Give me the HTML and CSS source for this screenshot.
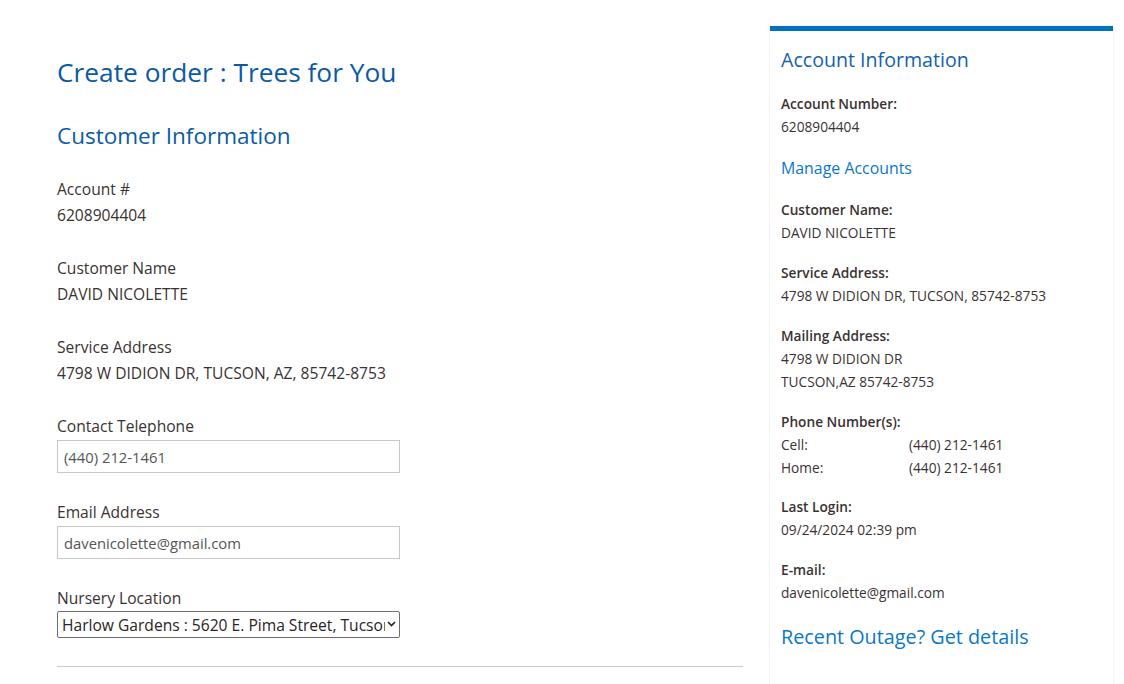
FILE: index.html
```html
<!DOCTYPE html>
<html lang="en">
<head>
<meta charset="utf-8">
<title>Create order : Trees for You</title>
<link rel="stylesheet" href="styles.css">
</head>
<body>
<div class="page">
  <main class="main">
    <h1 class="page-title">Create order : Trees for You</h1>
    <h2 class="section-title">Customer Information</h2>

    <div class="field">
      <div class="field-label">Account #</div>
      <div class="field-value">6208904404</div>
    </div>
    <div class="field">
      <div class="field-label">Customer Name</div>
      <div class="field-value">DAVID NICOLETTE</div>
    </div>
    <div class="field">
      <div class="field-label">Service Address</div>
      <div class="field-value">4798 W DIDION DR, TUCSON, AZ, 85742-8753</div>
    </div>
    <div class="field field-input">
      <label class="field-label" for="phone">Contact Telephone</label>
      <input class="text-input" id="phone" type="text" value="(440) 212-1461">
    </div>
    <div class="field field-input">
      <label class="field-label" for="email">Email Address</label>
      <input class="text-input" id="email" type="text" value="davenicolette@gmail.com">
    </div>
    <div class="field">
      <label class="field-label" for="nursery">Nursery Location</label>
      <div class="select-wrap">
        <select class="select-input" id="nursery">
          <option>Harlow Gardens : 5620 E. Pima Street, Tucson, AZ 85712</option>
        </select>
        <svg class="select-chevron" width="9" height="6" viewBox="0 0 9 6"><path d="M1 1 L4.5 4.5 L8 1" fill="none" stroke="#222" stroke-width="1.6"/></svg>
      </div>
    </div>
    <hr class="divider">
  </main>

  <aside class="sidebar">
    <div class="card">
      <h3 class="card-title">Account Information</h3>
      <div class="info">
        <div class="info-label">Account Number:</div>
        <div>6208904404</div>
      </div>
      <a class="card-link" href="#">Manage Accounts</a>
      <div class="info">
        <div class="info-label">Customer Name:</div>
        <div>DAVID NICOLETTE</div>
      </div>
      <div class="info">
        <div class="info-label">Service Address:</div>
        <div>4798 W DIDION DR, TUCSON, 85742-8753</div>
      </div>
      <div class="info">
        <div class="info-label">Mailing Address:</div>
        <div>4798 W DIDION DR</div>
        <div>TUCSON,AZ 85742-8753</div>
      </div>
      <div class="info">
        <div class="info-label">Phone Number(s):</div>
        <div class="phone-row"><span>Cell:</span><span>(440) 212-1461</span></div>
        <div class="phone-row"><span>Home:</span><span>(440) 212-1461</span></div>
      </div>
      <div class="info">
        <div class="info-label">Last Login:</div>
        <div>09/24/2024 02:39 pm</div>
      </div>
      <div class="info">
        <div class="info-label">E-mail:</div>
        <div>davenicolette@gmail.com</div>
      </div>
      <a class="outage-link" href="#">Recent Outage? Get details</a>
    </div>
  </aside>
</div>
</body>
</html>
```

FILE: styles.css
```css
* { box-sizing: border-box; }

html, body {
  margin: 0;
  padding: 0;
  background: #ffffff;
}

body {
  font-family: "Open Sans", "Noto Sans", "Liberation Sans", sans-serif;
  color: #3a3232;
  height: 684px;
  overflow: hidden;
}

.page {
  display: flex;
  align-items: flex-start;
  gap: 27px;
  padding: 26px 11px 0 57px;
}

.main {
  width: 686px;
  flex: 0 0 686px;
  padding-top: 26px;
}

.page-title {
  margin: 0;
  font-size: 26.3px;
  line-height: 40px;
  font-weight: 400;
  color: #0b5aa3;
}

.section-title {
  margin: 28px 0 0;
  font-size: 22.5px;
  line-height: 32px;
  font-weight: 400;
  color: #0b5aa3;
}

.field {
  display: flex;
  flex-direction: column;
  margin-top: 27px;
  font-size: 15.6px;
  line-height: 26px;
}

.section-title + .field { margin-top: 24px; }

.field-label,
.field-value {
  display: block;
  height: 26px;
}

.text-input {
  margin-top: 1px;
  width: 343px;
  height: 33px;
  border: 1px solid #c8c8c8;
  border-radius: 0;
  padding: 0 6px;
  font-family: inherit;
  font-size: 14.8px;
  color: #555555;
  background: #ffffff;
  outline: none;
}

.field-input + .field { margin-top: 26px; }

.select-wrap {
  position: relative;
  width: 343px;
}

.select-input {
  -webkit-appearance: none;
  appearance: none;
  display: block;
  width: 343px;
  height: 27px;
  border: 1px solid #6e6e6e;
  border-radius: 2px;
  padding: 0 14px 0 4px;
  font-family: inherit;
  font-size: 15.6px;
  color: #2a2424;
  background: #ffffff;
  outline: none;
}

.select-chevron {
  position: absolute;
  right: 4px;
  top: 10px;
  pointer-events: none;
}

.divider {
  margin: 28px 0 0;
  border: 0;
  border-top: 1px solid #cccccc;
  height: 0;
}

.sidebar {
  width: 343px;
  flex: 0 0 343px;
}

.card {
  background: #ffffff;
  border-top: 5px solid #0072bc;
  box-shadow: 0 0 0 1px #f4f4f4, 1px 0 2px rgba(0,0,0,0.03);
  padding: 14px 11px 80px;
  font-size: 13.7px;
  line-height: 23px;
}

.card-title {
  margin: 0;
  font-size: 19.6px;
  line-height: 30px;
  font-weight: 400;
  color: #1262ac;
}

.info {
  margin-top: 16.9px;
}

.info-label {
  font-weight: 600;
}

.card-link {
  display: block;
  margin-top: 18px;
  font-size: 15.9px;
  line-height: 24px;
  color: #0a78c6;
  text-decoration: none;
}

.card-link + .info { margin-top: 18px; }

.phone-row {
  display: grid;
  grid-template-columns: 128px 1fr;
}

.outage-link {
  display: block;
  margin-top: 17.6px;
  font-size: 19.8px;
  line-height: 30px;
  color: #0a78c6;
  text-decoration: none;
}
```
